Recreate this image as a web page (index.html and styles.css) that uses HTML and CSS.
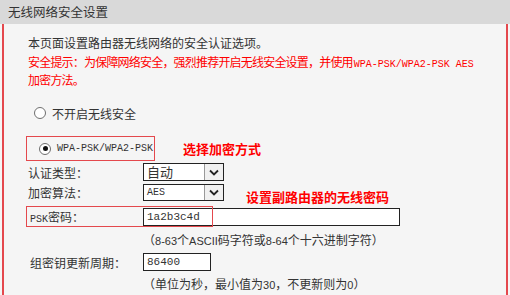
FILE: index.html
```html
<!DOCTYPE html>
<html lang="zh-CN">

<head>
  <meta charset="UTF-8">
  <meta name="viewport" content="width=device-width, initial-scale=1.0">
  <title>无线网络安全设置</title>
  <link rel="stylesheet" href="styles.css">
</head>

<body>
  <div class="title-bar">无线网络安全设置</div>

  <div class="panel">
    <p class="intro">本页面设置路由器无线网络的安全认证选项。</p>
    <p class="warn">安全提示：为保障网络安全，强烈推荐开启无线安全设置，并使用<span class="mono">WPA-PSK/WPA2-PSK AES</span><br>加密方法。</p>

    <!-- 不开启 -->
    <div class="row row-off">
      <span class="radio"></span>
      <span class="opt-text">不开启无线安全</span>
    </div>

    <!-- WPA-PSK -->
    <div class="row row-wpa">
      <div class="wpa-opt">
        <span class="radio checked"></span>
        <span class="opt-text mono">WPA-PSK/WPA2-PSK</span>
      </div>
      <span class="note">选择加密方式</span>
    </div>

    <div class="row row-auth">
      <label class="field-label">认证类型：</label>
      <div class="select">
        <span class="select-value">自动</span>
        <span class="select-btn">
          <svg width="10" height="7" viewBox="0 0 10 7"><polyline points="1,1.5 5,5.5 9,1.5" fill="none" stroke="#222" stroke-width="1.8"/></svg>
        </span>
      </div>
    </div>

    <div class="row row-algo">
      <label class="field-label">加密算法：</label>
      <div class="select">
        <span class="select-value small">AES</span>
        <span class="select-btn">
          <svg width="10" height="7" viewBox="0 0 10 7"><polyline points="1,1.5 5,5.5 9,1.5" fill="none" stroke="#222" stroke-width="1.8"/></svg>
        </span>
      </div>
      <span class="note note-psk">设置副路由器的无线密码</span>
    </div>

    <div class="row row-psk">
      <span class="mark-box"></span>
      <label class="field-label"><span class="mono">PSK</span>密码：</label>
      <div class="text-input wide">1a2b3c4d</div>
    </div>
    <p class="hint">（<span class="num">8-63</span>个<span class="num">ASCII</span>码字符或<span class="num">8-64</span>个十六进制字符）</p>

    <div class="row row-group">
      <label class="field-label">组密钥更新周期：</label>
      <div class="text-input short">86400</div>
    </div>
    <p class="hint">（单位为秒，最小值为<span class="num">30</span>，不更新则为<span class="num">0</span>）</p>
  </div>
</body>

</html>
```

FILE: styles.css
```css
body {
  margin: 0;
  background-color: #f5f5f5;
  font-family: "Noto Sans CJK SC", "Noto Sans", sans-serif;
  font-size: 12px;
  color: #333;
}

p {
  margin: 0;
}

.mono {
  font-family: "Liberation Mono", monospace;
  font-size: 10px;
  line-height: 1;
}

.num {
  font-family: "Liberation Sans", sans-serif;
  font-size: 11px;
  line-height: 1;
}

/* Title bar */
.title-bar {
  height: 24px;
  line-height: 24px;
  padding-left: 8px;
  background-color: #d9d9d9;
  font-size: 12.5px;
  color: #333;
}

/* Main panel with red side lines */
.panel {
  margin: 0 2px;
  height: 271px;
  border-left: 2px solid #e4484d;
  border-right: 2px solid #e4484d;
  padding: 10px 0 0 24px;
  box-sizing: border-box;
}

.intro,
.warn {
  line-height: 18.5px;
}

.warn {
  color: #f00;
  letter-spacing: -0.8px;
}

.warn .mono {
  letter-spacing: 0;
  padding-left: 1px;
}

.row {
  display: flex;
  align-items: center;
  position: relative;
}

.row-off {
  height: 20px;
  margin-top: 13.5px;
  padding-left: 6px;
}

.row-wpa {
  height: 25px;
  margin-top: 13px;
}

.row-auth {
  height: 18px;
  margin-top: 2px;
}

.row-algo {
  height: 17px;
  margin-top: 3px;
}

.row-psk {
  height: 21px;
  margin-top: 5px;
}

.row-group {
  height: 18px;
  margin-top: 4px;
}

/* Radio buttons */
.radio {
  width: 12px;
  height: 12px;
  border: 1px solid #6f6f6f;
  border-radius: 50%;
  background-color: #fff;
  box-sizing: border-box;
  position: relative;
  flex-shrink: 0;
}

.radio.checked::after {
  content: "";
  position: absolute;
  left: 2.5px;
  top: 2.5px;
  width: 5px;
  height: 5px;
  border-radius: 50%;
  background-color: #111;
}

.opt-text {
  margin-left: 6px;
}

.wpa-opt {
  display: flex;
  align-items: center;
  height: 25px;
  width: 129px;
  margin-left: -2px;
  padding-left: 12px;
  border: 1.5px solid #e4484d;
  box-sizing: border-box;
}

.note {
  color: #f00;
  font-weight: bold;
  font-size: 13px;
  margin-left: 28px;
}

.note-psk {
  position: absolute;
  left: 218px;
  top: 4px;
  margin-left: 0;
  line-height: 17px;
}

/* Form fields */
.field-label {
  width: 115px;
  flex-shrink: 0;
}

.select {
  display: flex;
  width: 81px;
  height: 100%;
  border: 1px solid #222;
  box-sizing: border-box;
  background-color: #fff;
}

.select-value {
  flex: 1;
  padding-left: 3px;
  font-size: 13px;
  line-height: 16px;
}

.select-value.small {
  font-family: "Liberation Mono", monospace;
  font-size: 10px;
}

.select-btn {
  width: 18px;
  display: flex;
  align-items: center;
  justify-content: center;
  border-left: 1px solid #999;
  background-color: #f0f0f0;
}

.text-input {
  height: 18px;
  line-height: 16px;
  border: 1px solid #222;
  box-sizing: border-box;
  background-color: #fff;
  padding-left: 3px;
  font-family: "Liberation Mono", monospace;
  font-size: 11px;
  color: #333;
}

.text-input.wide {
  width: 257px;
}

.text-input.short {
  width: 68px;
}

.row-psk .field-label {
  padding-left: 2px;
  box-sizing: border-box;
}

/* Red annotation box over the PSK field */
.mark-box {
  position: absolute;
  left: -2px;
  top: 0;
  width: 187px;
  height: 21px;
  border: 1.5px solid #e4484d;
  box-sizing: border-box;
}

.hint {
  margin-left: 115px;
  line-height: 19px;
}

.row-psk + .hint {
  margin-top: 3px;
}

.row-group + .hint {
  margin-top: 3px;
}

.row-group .field-label {
  padding-left: 2px;
  box-sizing: border-box;
}
```
